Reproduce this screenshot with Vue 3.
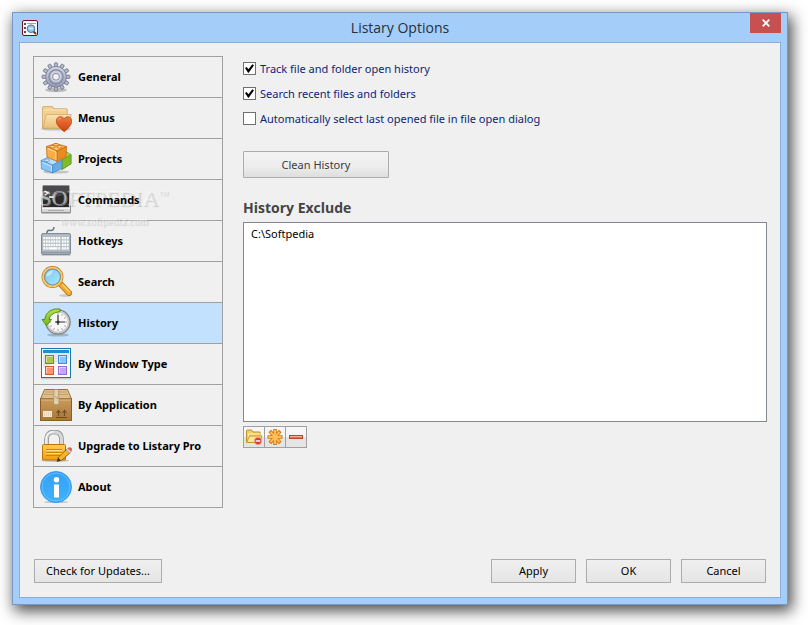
<script setup>
import { ref } from 'vue'

const items = [
  { id: 'general', label: 'General' },
  { id: 'menus', label: 'Menus' },
  { id: 'projects', label: 'Projects' },
  { id: 'commands', label: 'Commands' },
  { id: 'hotkeys', label: 'Hotkeys' },
  { id: 'search', label: 'Search' },
  { id: 'history', label: 'History' },
  { id: 'windowtype', label: 'By Window Type' },
  { id: 'application', label: 'By Application' },
  { id: 'upgrade', label: 'Upgrade to Listary Pro' },
  { id: 'about', label: 'About' },
]
const active = ref('history')

const options = ref([
  { id: 'track', label: 'Track file and folder open history', on: true },
  { id: 'recent', label: 'Search recent files and folders', on: true },
  { id: 'auto', label: 'Automatically select last opened file in file open dialog', on: false },
])

const excluded = ref(['C:\\Softpedia'])

// keycaps of the keyboard icon
const keys = []
for (let row = 0; row < 4; row++) {
  for (let col = 0; col < 10; col++) {
    if (row === 3 && col > 1 && col < 6) continue
    keys.push({ x: 4 + col * 2.5 + (col > 6 ? 1 : 0), y: 12 + row * 3.4 })
  }
}
</script>

<template>
  <div class="desktop">
    <div class="window">
      <header class="titlebar">
        <svg class="app-icon" width="16" height="16" viewBox="0 0 16 16">
          <rect x="0.5" y="0.5" width="15" height="15" rx="1.5" fill="#fbf7f6" stroke="#6d1518" />
          <path d="M2 3h2v2H2zM2 7h2v2H2zM2 11h2v2H2z" fill="#5c4a52" />
          <path d="M5 3.5h9" stroke="#a9a0a4" />
          <path d="M11 11l3 3" stroke="#5f3a22" stroke-width="2" />
          <circle cx="9" cy="8.7" r="3.8" fill="#8cc8f2" stroke="#4e7399" />
          <path d="M6.8 8.5h4.4" stroke="#dff3ff" stroke-width="1.4" />
        </svg>
        <h1>Listary Options</h1>
        <button class="close" type="button" aria-label="Close">
          <svg width="8" height="8" viewBox="0 0 8 8"><path d="M0.7 0.7L7.3 7.3M7.3 0.7L0.7 7.3" stroke="#fff" stroke-width="1.8" /></svg>
        </button>
      </header>

      <main class="client">
        <div class="panes">
          <nav class="sidebar">
            <button
              v-for="item in items" :key="item.id" type="button"
              class="item" :class="{ active: active === item.id }"
              @click="active = item.id"
            >
              <svg width="32" height="32" viewBox="0 0 32 32" aria-hidden="true">
                <g v-if="item.id === 'general'">
                  <ellipse cx="16" cy="29" rx="11" ry="2" fill="#000" opacity="0.22" />
                  <g fill="#b4bace" stroke="#6b7186" stroke-width="0.8">
                    <rect v-for="k in 12" :key="k" x="14.4" y="1.8" width="3.2" height="6" rx="0.8" :transform="`rotate(${k * 30} 16 15.8)`" />
                  </g>
                  <circle cx="16" cy="15.8" r="10.4" fill="url(#steel)" stroke="#747a90" stroke-width="0.8" />
                  <circle cx="16" cy="15.8" r="7" fill="none" stroke="#878eaa" stroke-width="1.4" />
                  <circle cx="16" cy="15.8" r="5.2" fill="#d2d6e2" />
                  <circle cx="16" cy="15.8" r="3.4" fill="#f0f0f0" stroke="#7b8197" stroke-width="0.9" />
                </g>

                <g v-else-if="item.id === 'menus'">
                  <ellipse cx="16" cy="27" rx="15" ry="1.6" fill="#000" opacity="0.2" />
                  <path d="M2.5 26V6q0-1.5 1.5-1.5h8q1 0 1.3 1l.4 1.2H26q1.3 0 1.3 1.3v18z" fill="#f3cf91" stroke="#c99e56" stroke-width="0.7" />
                  <path d="M4 8h22" stroke="#fbe6bd" />
                  <path d="M2.8 26.3L6.4 12.5h25L27 26.3z" fill="url(#folder)" stroke="#cda25b" stroke-width="0.7" />
                  <path d="M24.2 29.8C21 26.8 16.3 23.5 16.3 19c0-4.6 5.7-6 7.9-2 2.2-4 7.5-2.6 7.5 2 0 4.5-4.2 7.8-7.5 10.800z" fill="url(#heart)" stroke="#b83b0e" stroke-width="0.7" />
                  <path d="M18 18.5q.6-2.7 3.2-2.200" stroke="#f9a177" fill="none" />
                </g>

                <g v-else-if="item.id === 'projects'" stroke-linejoin="round">
                  <ellipse cx="16" cy="29" rx="13" ry="1.6" fill="#000" opacity="0.18" />
                  <g stroke="#5d9a1c" stroke-width="0.7">
                    <path d="M18 13l8-4.500 5 3v9l-9 6-4-3z" fill="#a5d44a" />
                    <path d="M22 17l9-5.500v9.500l-9 5.500z" fill="#7fba2b" />
                  </g>
                  <g stroke="#3f88cc" stroke-width="0.7">
                    <path d="M1 17.500l9-4 12 4-9.500 4.500z" fill="#b9e0fc" />
                    <path d="M1 17.500l11.500 4.500v8L1.500 26z" fill="#8cc5f5" />
                    <path d="M12.500 22L22 17.500v8L12.500 30z" fill="#69aae6" />
                    <ellipse cx="7" cy="17.2" rx="2.5" ry="1.3" fill="#d7eefd" />
                  </g>
                  <g stroke="#c46a10" stroke-width="0.8">
                    <path d="M6.500 3.500l9-3 11 3-9.500 4.500z" fill="#ffc36c" />
                    <path d="M6.500 3.500L17 8v10.500L7 14z" fill="#fbae45" />
                    <path d="M17 8l9.500-4.500-.5 10.500-9 4.500z" fill="#ea8b20" />
                    <ellipse cx="12.5" cy="3.8" rx="2.6" ry="1.3" fill="#ffd48d" />
                    <ellipse cx="19.5" cy="3.8" rx="2.6" ry="1.3" fill="#ffd48d" />
                    <ellipse cx="16" cy="1.7" rx="2.5" ry="1.2" fill="#ffd48d" />
                  </g>
                  <path d="M8 5.500l8 3.400v8M2.500 19.500l9 3.600v5" stroke="#fff" fill="none" opacity="0.6" />
                </g>

                <g v-else-if="item.id === 'commands'">
                  <path d="M1.500 29h29" stroke="#000" opacity="0.2" stroke-width="2" />
                  <path d="M3 1.500h26L30.500 24v4.500h-29V24z" fill="#d6d6d6" stroke="#8e8e8e" />
                  <rect x="3" y="2" width="26" height="21" fill="#2b2b2d" />
                  <path d="M3 2h26v7L3 17z" fill="#4a4a4d" />
                  <path d="M2 24.500h28" stroke="#f5f5f5" />
                  <path d="M8 26.500h16" stroke="#aaa" />
                  <path d="M4.500 7l3.600 2-3.600 2.200M9 13h4.500" stroke="#fff" fill="none" stroke-width="1.4" />
                </g>

                <g v-else-if="item.id === 'hotkeys'">
                  <path d="M7 9q-.5-4 3-3.600 3.700.6 4-3.400" fill="none" stroke="#677482" stroke-width="1.5" />
                  <path d="M1.500 30.500h29" stroke="#000" opacity="0.15" />
                  <rect x="1.5" y="8.5" width="29" height="21" rx="1.5" fill="#a8b1ba" stroke="#7f8b96" />
                  <rect x="2.5" y="9.5" width="27" height="17" fill="#b4bdc5" />
                  <path d="M2 27.500h28" stroke="#8e99a4" stroke-width="1.5" />
                  <rect v-for="(k, i) in keys" :key="i" :x="k.x - 0.7" :y="k.y" width="1.9" height="2.3" fill="#fff" />
                  <rect x="8.5" y="22.2" width="9" height="2.3" fill="#fff" />
                </g>

                <g v-else-if="item.id === 'search'">
                  <ellipse cx="25" cy="29.5" rx="6" ry="1.5" fill="#000" opacity="0.15" />
                  <path d="M20 17.500l2.500 2.500" stroke="#8f98a3" stroke-width="4" />
                  <path d="M21.500 19l7.500 8" stroke="#b9700c" stroke-width="6" stroke-linecap="round" />
                  <path d="M21.500 19l7.500 8" stroke="#f6aa26" stroke-width="4.4" stroke-linecap="round" />
                  <path d="M22.500 18.500l7 7.500" stroke="#ffd978" stroke-width="1.2" />
                  <circle cx="12.5" cy="11" r="9.4" fill="url(#lens)" stroke="#b97a1d" stroke-width="3" />
                  <circle cx="12.5" cy="11" r="9.4" fill="none" stroke="#f8ca76" stroke-width="1.9" />
                  <circle cx="12.5" cy="11" r="7.8" fill="none" stroke="#4d94c9" stroke-width="0.7" />
                  <path d="M6 10.500Q7 5 13 4.600q-1 5-7 5.900z" fill="#fff" opacity="0.5" />
                </g>

                <g v-else-if="item.id === 'history'">
                  <ellipse cx="18" cy="28" rx="11" ry="1.6" fill="#000" opacity="0.2" />
                  <circle cx="18" cy="15" r="12" fill="#f7f7f7" stroke="#858585" stroke-width="1.6" />
                  <circle cx="18" cy="15" r="10.5" fill="none" stroke="#c9c9c9" stroke-width="1.6" />
                  <path d="M18 6v2M18 22v2M9 15h2M25 15h2M22.500 7.200l-1 1.700M25.800 10.500l-1.700 1M22.500 22.800l-1-1.700M25.800 19.500l-1.700-1M13.500 22.800l1-1.700M10.200 19.500l1.700-1" stroke="#888" stroke-width="0.8" />
                  <path d="M18 8v7h7M15 15h3v3" stroke="#333" stroke-width="1.2" fill="none" />
                  <circle cx="18" cy="15" r="1.6" fill="#333" />
                  <path d="M20 2Q7 .5 4.500 12.500H2l4.500 6.200 5-6.200H9Q10.500 5.500 20 4.700z" fill="url(#green)" stroke="#4a8a0c" stroke-width="0.9" stroke-linejoin="round" />
                </g>

                <g v-else-if="item.id === 'windowtype'">
                  <path d="M1 30.800h30" stroke="#000" opacity="0.2" />
                  <rect x="1.5" y="0.5" width="29" height="29" fill="#fbfbfb" stroke="#1878a8" />
                  <rect x="3" y="2" width="26" height="3" fill="#1d8fd0" />
                  <path d="M3 5h26v5L3 20z" fill="#d9dcde" opacity="0.7" />
                  <rect x="5.5" y="7.5" width="8" height="8" fill="#abc653" stroke="#719016" />
                  <rect x="18.5" y="7.5" width="8" height="8" fill="#8bc5fa" stroke="#428ed5" />
                  <rect x="5.5" y="18.5" width="8" height="8" fill="#ff946e" stroke="#dd5829" />
                  <rect x="18.5" y="18.5" width="8" height="8" fill="#c7a5fb" stroke="#946bd7" />
                  <path d="M6.500 14V8.500H13M19.500 14V8.500H26M6.500 25v-5.500H13M19.500 25v-5.500H26" fill="none" stroke="#fff" opacity="0.5" />
                </g>

                <g v-else-if="item.id === 'application'">
                  <path d="M4.500.5h23l4 9.500H.5z" fill="#dcbd8b" stroke="#957140" />
                  <path d="M5 3h22M4 5.500h24" stroke="#bb9560" stroke-width="0.7" />
                  <rect x="0.5" y="10" width="31" height="21.5" fill="url(#box)" stroke="#8a6028" />
                  <path d="M1 11h30" stroke="#e0bc84" />
                  <path d="M14 .5h4.500l.5 14.500q-2.700 1.500-5.500 0z" fill="#e0cfb0" stroke="#ab8a5a" stroke-width="0.7" />
                  <path d="M15 7l2 3 1-3" fill="none" stroke="#b59868" stroke-width="0.7" />
                  <rect x="3" y="22" width="9" height="6" fill="#f2e8d8" />
                  <path d="M4 24h7M4 26h7" stroke="#c4a981" stroke-width="0.7" stroke-dasharray="1 1" />
                  <path d="M18.500 27v-4.500M24.500 27v-4.500M16.500 24l2-2.500 2 2.500M22.500 24l2-2.500 2 2.500M16 28.500h11" fill="none" stroke="#704b20" stroke-width="1.1" />
                </g>

                <g v-else-if="item.id === 'upgrade'">
                  <ellipse cx="15" cy="30.5" rx="14" ry="1.5" fill="#000" opacity="0.2" />
                  <path d="M6.500 17V9.500Q6.500 2 14 2t7.500 7.500V17" fill="none" stroke="#8d8d8d" stroke-width="4.6" />
                  <path d="M6.500 17V9.500Q6.500 2 14 2t7.500 7.500V17" fill="none" stroke="#d8d8d8" stroke-width="3" />
                  <path d="M6 16V9.500Q6.300 2 14 1.700" fill="none" stroke="#fff" />
                  <rect x="2.5" y="14.5" width="23" height="15.5" rx="1" fill="url(#gold)" stroke="#be7307" />
                  <path d="M6 19.500h16M6 22.500h16M6 25.500h14" stroke="#d18508" />
                  <path d="M6 20.500h16M6 23.500h16" stroke="#ffe79a" stroke-width="0.8" />
                  <path d="M17 31.500l1.500-4.500 8-7.500 3.500 3.400-8.200 7.300z" fill="#f4b32a" stroke="#7f540d" stroke-width="0.8" />
                  <path d="M17 31.500l1.200-3.700 2.800 2.600z" fill="#443322" />
                  <path d="M26 20l1.700-1.700 3.700 3.400-1.700 1.600z" fill="#d6d6d6" stroke="#777" stroke-width="0.5" />
                  <path d="M27.700 18.300l1.300-1q1.500-.4 2.500.8t.2 2.500l-.6 1z" fill="#e0604a" />
                </g>

                <g v-else>
                  <ellipse cx="16" cy="31" rx="12" ry="1" fill="#000" opacity="0.2" />
                  <circle cx="16" cy="16" r="15.5" fill="url(#info)" stroke="#2b92e8" stroke-width="0.8" />
                  <circle cx="16" cy="16" r="14" fill="none" stroke="#7dc9ff" stroke-width="0.7" />
                  <circle cx="16.5" cy="8.7" r="2.7" fill="#fff" />
                  <rect x="14" y="13.5" width="5" height="13" fill="#fff" />
                </g>
              </svg>
              <span class="label">{{ item.label }}</span>
            </button>
            <div class="watermark" aria-hidden="true">
              <div class="wm-name">SOFTPEDIA<sup>™</sup></div>
              <div class="wm-url">www.softpedia.com</div>
            </div>
          </nav>

          <section class="content">
            <div class="options">
              <label v-for="o in options" :key="o.id" class="option" :for="o.id">
                <input :id="o.id" v-model="o.on" type="checkbox">
                <span>{{ o.label }}</span>
              </label>
            </div>
            <button class="btn clean" type="button">Clean History</button>
            <h2 id="exclude-title">History Exclude</h2>
            <ul class="list" aria-labelledby="exclude-title">
              <li v-for="path in excluded" :key="path">{{ path }}</li>
            </ul>
            <div class="tools">
              <button type="button" aria-label="Exclude folder">
                <svg width="18" height="18" viewBox="0 0 18 18">
                  <path d="M1.500 14V3q0-1 1-1h4l1.500 2H15v10z" fill="#f8cf62" stroke="#c18d26" />
                  <path d="M3.500 11V6h12" stroke="#fff0b8" fill="none" />
                  <path d="M1.500 14.500l3-6.500h12.500l-2.500 6.500z" fill="#fde59a" stroke="#c9952c" />
                  <circle cx="13" cy="13" r="3.7" fill="#dd3b2e" stroke="#f7b4a5" stroke-width="0.6" />
                  <path d="M10.700 13h4.600" stroke="#fff" stroke-width="1.5" />
                </svg>
              </button>
              <button type="button" aria-label="Exclude pattern">
                <svg width="18" height="18" viewBox="0 0 18 18">
                  <path d="M9 1v16M1.500 9h15M3.800 3l10.400 12M14.200 3L3.800 15" stroke="#d27b12" stroke-width="3.6" />
                  <path d="M9 2v14M2.500 9h13M4.500 3.800l9 10.400M13.500 3.800l-9 10.400" stroke="#ffbd55" stroke-width="2" />
                </svg>
              </button>
              <button type="button" aria-label="Remove">
                <svg width="18" height="18" viewBox="0 0 18 18">
                  <rect x="2.5" y="7.5" width="13" height="3" fill="#e8705c" stroke="#c04436" />
                  <path d="M3 8.500h12" stroke="#f7ac9c" />
                </svg>
              </button>
            </div>
          </section>
        </div>

        <footer class="footer">
          <button class="btn updates" type="button">Check for Updates...</button>
          <button class="btn" type="button">Apply</button>
          <button class="btn" type="button">OK</button>
          <button class="btn" type="button">Cancel</button>
        </footer>
      </main>
    </div>

    <!-- gradients shared by the sidebar icons -->
    <svg class="defs" width="0" height="0" aria-hidden="true">
      <defs>
        <linearGradient id="steel" x2="0" y2="1"><stop stop-color="#d5d9e6" /><stop offset="1" stop-color="#9299b2" /></linearGradient>
        <linearGradient id="folder" x2="0" y2="1"><stop stop-color="#fbe3b4" /><stop offset="1" stop-color="#e9bf76" /></linearGradient>
        <linearGradient id="heart" x2="0" y2="1"><stop stop-color="#ef7a42" /><stop offset="1" stop-color="#cc4108" /></linearGradient>
        <linearGradient id="lens" x2="1" y2="1"><stop stop-color="#7cc2f3" /><stop offset="1" stop-color="#a9edff" /></linearGradient>
        <linearGradient id="green" x2="0" y2="1"><stop stop-color="#b9e04e" /><stop offset="1" stop-color="#6fb81c" /></linearGradient>
        <linearGradient id="box" x2="0" y2="1"><stop stop-color="#c79a5c" /><stop offset="1" stop-color="#a87736" /></linearGradient>
        <linearGradient id="gold" x2="0" y2="1"><stop stop-color="#ffce4d" /><stop offset="1" stop-color="#f09c12" /></linearGradient>
        <linearGradient id="info" x2="0" y2="1"><stop stop-color="#35a0f4" /><stop offset="1" stop-color="#3db2ff" /></linearGradient>
      </defs>
    </svg>
  </div>
</template>

<style>
body { background: #fff; }
</style>

<style scoped>
.desktop {
  box-sizing: border-box;
  display: flex;
  min-height: 100vh;
  padding: 12px 20px 20px 12px;
  font: 11px/16px "Noto Sans", "Open Sans", sans-serif;
  color: #000;
}
.desktop *, .desktop *::before { box-sizing: border-box; }
button { font: inherit; color: inherit; margin: 0; padding: 0; cursor: default; }
.defs { position: absolute; }

.window {
  flex: 1;
  display: flex;
  flex-direction: column;
  padding: 0 6px 6px;
  background: #a4cdf9;
  border: 1px solid #7599c4;
  box-shadow: 3px 5px 14px 1px rgba(0, 0, 0, 0.7);
}
.titlebar {
  display: grid;
  grid-template-columns: 48px 1fr 48px;
  align-items: center;
  height: 29px;
}
.app-icon { margin-left: 3px; }
h1, h2 { font-family: "Open Sans", "Noto Sans", sans-serif; font-size: 14px; line-height: 20px; }
h1 { margin: 0; font-weight: 400; text-align: center; color: #25303c; }
.close {
  display: grid;
  place-items: center;
  justify-self: end;
  align-self: start;
  width: 31px;
  height: 20px;
  background: #c75050;
  border: 0;
}
.client {
  flex: 1;
  display: flex;
  flex-direction: column;
  padding: 13px 13px 14px;
  background: #f0f0f0;
  border: 1px solid #8aaedb;
}
.panes { display: flex; align-items: flex-start; gap: 20px; }

.sidebar { position: relative; width: 190px; flex: none; border: 1px solid #a0a0a0; border-bottom: 0; }
.item {
  display: flex;
  align-items: center;
  gap: 6px;
  width: 100%;
  height: 41px;
  padding-left: 6px;
  border: 0;
  border-bottom: 1px solid #a0a0a0;
  background: #f0f0f0;
  font-weight: 700;
}
.item svg { flex: none; }
.item.active { background: #c2e1ff; }
.label { position: relative; z-index: 1; }

.watermark {
  position: absolute;
  left: 6px;
  top: 130px;
  pointer-events: none;
  color: rgba(240, 240, 240, 0.4);
  text-shadow: 1px 1px 1px rgba(0, 0, 0, 0.16), -1px -1px 0 rgba(255, 255, 255, 0.5);
  font-family: "Liberation Serif", serif;
}
.wm-name { font-size: 22px; line-height: 24px; white-space: nowrap; }
.wm-name sup { font-size: 10px; line-height: 10px; }
.wm-url { font-size: 11px; line-height: 20px; text-align: center; }

.content { flex: 1; min-width: 0; }
.options { display: grid; gap: 10px; padding-top: 5px; line-height: 15px; }
.option { display: flex; align-items: center; gap: 4px; color: #0c2674; }
.option input {
  appearance: none;
  display: grid;
  place-items: center;
  width: 13px;
  height: 13px;
  margin: 0;
  background: #fff;
  border: 1px solid #707070;
}
.option input:checked::before {
  content: "";
  width: 9px;
  height: 9px;
  background: #000;
  clip-path: polygon(0 45%, 18% 32%, 38% 58%, 82% 2%, 100% 14%, 42% 96%, 34% 96%);
}
.btn {
  width: 85px;
  height: 24px;
  border: 1px solid #acacac;
  background: linear-gradient(#f0f0f0, #e5e5e5);
}
.clean {
  display: block;
  width: 146px;
  height: 27px;
  margin-top: 25px;
  border-radius: 1px;
  background: linear-gradient(#f3f3f3, #ededed 60%, #dedede);
  color: #3c3c3c;
}
h2 { margin: 20px 0 4px; font-weight: 700; color: #444; }
.list {
  min-height: 200px;
  margin: 0;
  padding: 3px 7px;
  list-style: none;
  background: #fff;
  border: 1px solid #828790;
}
.tools {
  display: flex;
  gap: 1px;
  width: max-content;
  margin-top: 4px;
  background: #a0a0a0;
  border: 1px solid #a0a0a0;
}
.tools button {
  display: grid;
  place-items: center;
  width: 20px;
  height: 20px;
  border: 0;
  background: linear-gradient(#f6f6f6 50%, #e4e4e4 50%);
}

.footer { display: flex; gap: 10px; margin-top: auto; padding: 0 1px; }
.updates { width: 128px; margin-right: auto; }
</style>
